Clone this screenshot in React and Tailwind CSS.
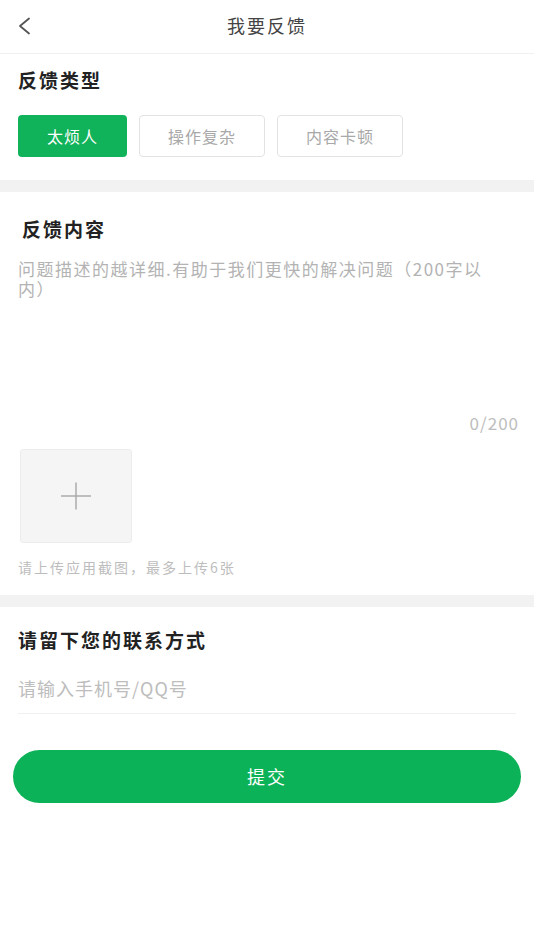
export default function App() {
  const font = { fontFamily: '"Noto Sans CJK SC", "Noto Sans", sans-serif' };
  return (
    <div className="w-[534px] min-h-[950px] bg-white" style={font}>
      {/* header */}
      <div className="relative h-[54px] border-b border-[#f0f0f0] flex items-center justify-center">
        <svg className="absolute left-[17px] top-[17px]" width="16" height="18" viewBox="0 0 16 18" fill="none">
          <polyline points="12,1.5 3,9 12,16.5" stroke="#555" strokeWidth="1.8" strokeLinecap="round" strokeLinejoin="round" />
        </svg>
        <span className="text-[18px] leading-[24px] text-[#444] tracking-[2px] mt-[-4px]">我要反馈</span>
      </div>

      {/* type */}
      <div className="px-[18px] pt-[14px] pb-[23px]">
        <div className="text-[19px] leading-[24px] font-bold text-[#222] tracking-[2px]">反馈类型</div>
        <div className="mt-[23px] flex gap-[12px]">
          <div className="w-[109px] h-[42px] rounded-[4px] bg-[#10b25a] text-white text-[16px] tracking-[1px] flex items-center justify-center">太烦人</div>
          <div className="w-[126px] h-[42px] rounded-[4px] border border-[#e3e3e3] text-[#a8a8a8] text-[16px] tracking-[1px] flex items-center justify-center">操作复杂</div>
          <div className="w-[126px] h-[42px] rounded-[4px] border border-[#e3e3e3] text-[#a8a8a8] text-[16px] tracking-[1px] flex items-center justify-center">内容卡顿</div>
        </div>
      </div>

      <div className="h-[12px] bg-[#f2f2f2]" />

      {/* content */}
      <div className="pl-[18px] pr-[15px] pt-[25px] pb-[20px]">
        <div className="pl-[4px] text-[19px] leading-[24px] font-bold text-[#222] tracking-[2px]">反馈内容</div>
        <div className="mt-[18px] h-[154px] text-[17px] leading-[20px] text-[#b3b3b3] tracking-[1.5px]">
          <div>问题描述的越详细.有助于我们更快的解决问题（200字以</div>
          <div>内）</div>
        </div>
        <div className="text-right text-[17px] leading-[20px] text-[#bdbdbd] tracking-[1px]">0/200</div>
        <div className="mt-[16px] ml-[2px] w-[112px] h-[94px] rounded-[3px] bg-[#f5f5f5] border border-[#ececec] flex items-center justify-center">
          <svg width="32" height="30" viewBox="0 0 32 30" fill="none">
            <line x1="1" y1="15" x2="31" y2="15" stroke="#a6a6a6" strokeWidth="1.4" />
            <line x1="16" y1="1.5" x2="16" y2="28.5" stroke="#a6a6a6" strokeWidth="1.4" />
          </svg>
        </div>
        <div className="mt-[16px] text-[14px] leading-[16px] text-[#bdbdbd] tracking-[2px]">请上传应用截图，最多上传6张</div>
      </div>

      <div className="h-[12px] bg-[#f2f2f2]" />

      {/* contact */}
      <div className="px-[18px] pt-[21px]">
        <div className="text-[19px] leading-[24px] font-bold text-[#222] tracking-[2px]">请留下您的联系方式</div>
        <div className="mt-[25px] pb-[14px] border-b border-[#f0f0f0] text-[18px] leading-[22px] text-[#bdbdbd] tracking-[1px]">请输入手机号/QQ号</div>
      </div>

      <div className="px-[13px] pt-[36px]">
        <div className="h-[53px] rounded-full bg-[#0cb257] text-white text-[18px] tracking-[2px] flex items-center justify-center">提交</div>
      </div>
    </div>
  );
}
